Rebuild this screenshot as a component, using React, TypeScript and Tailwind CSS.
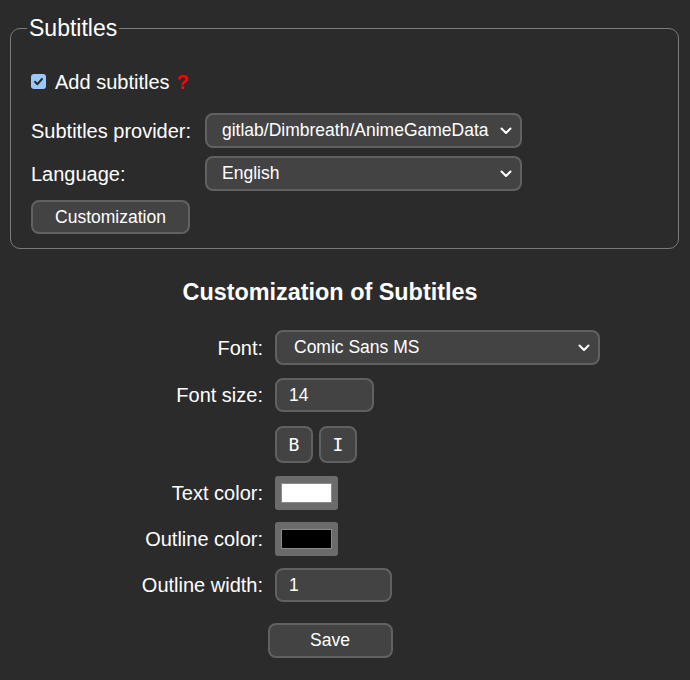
import { useState } from "react"

const font = "font-['Liberation_Sans',Arial,sans-serif]"

function Chevron() {
  return (
    <svg width="12" height="8" viewBox="0 0 12 8" className="shrink-0">
      <path d="M1.5 1.5 L6 6 L10.5 1.5" fill="none" stroke="#fff" strokeWidth="2" strokeLinecap="round" strokeLinejoin="round" />
    </svg>
  )
}

function Select({ value, className }: { value: string; className: string }) {
  return (
    <div
      className={`flex items-center justify-between h-[35px] rounded-[8px] border-2 border-[#616161] bg-[#434343] pl-[15px] pr-[8px] text-[17.5px] text-white ${className}`}
    >
      <span className="truncate">{value}</span>
      <Chevron />
    </div>
  )
}

function Field({ value, className }: { value: string; className: string }) {
  return (
    <div className={`flex items-center h-[34px] rounded-[8px] border-2 border-[#616161] bg-[#434343] px-[12px] text-[17.5px] text-white ${className}`}>
      {value}
    </div>
  )
}

function Swatch({ color }: { color: string }) {
  return (
    <div className="w-[63px] h-[34px] rounded-[3px] bg-[#6b6b6b] flex items-center justify-center">
      <div className={`w-[51px] h-[20px] border border-[#8a8a8a] ${color}`} />
    </div>
  )
}

function Row({ label, children, className = "" }: { label: string; children: React.ReactNode; className?: string }) {
  return (
    <div className={`flex items-center gap-[12px] ${className}`}>
      <div className="w-[263px] text-right text-[20px] text-white">{label}</div>
      {children}
    </div>
  )
}

export default function App() {
  const [checked] = useState(true)

  return (
    <div className={`min-h-[680px] w-[690px] bg-[#2b2b2b] pt-[15px] ${font}`}>
      <fieldset className="ml-[10px] w-[669px] rounded-[10px] border border-[#7a7a7a] px-[20px] pb-[14px]">
        <legend className="ml-[-4px] px-[2px] text-[23px] leading-[26px] text-white">Subtitles</legend>

        <label className="mt-[29px] flex items-center h-[23px] text-[20px] text-white">
          <span className="flex h-[15px] w-[15px] items-center justify-center rounded-[3px] bg-[#99c8ff]">
            {checked && (
              <svg width="11" height="11" viewBox="0 0 11 11">
                <path d="M2 5.8 L4.4 8.2 L9 3" fill="none" stroke="#2b2b2b" strokeWidth="2" strokeLinecap="round" strokeLinejoin="round" />
              </svg>
            )}
          </span>
          <span className="ml-[9px]">Add subtitles</span>
          <span className="ml-[7px] font-bold text-[#ff0000]">?</span>
        </label>

        <div className="mt-[20px] flex items-center">
          <div className="w-[174px] text-[20px] text-white">Subtitles provider:</div>
          <Select value="gitlab/Dimbreath/AnimeGameData" className="w-[317px]" />
        </div>
        <div className="mt-[8px] flex items-center">
          <div className="w-[174px] text-[20px] text-white">Language:</div>
          <Select value="English" className="w-[317px]" />
        </div>
        <button className="mt-[9px] h-[34px] w-[159px] rounded-[8px] border-2 border-[#616161] bg-[#434343] text-[17.5px] text-white">
          Customization
        </button>
      </fieldset>

      <div className="w-[660px]">
        <h3 className="mt-[30px] text-center text-[23.4px] leading-[27px] font-bold text-white">Customization of Subtitles</h3>

        <Row label="Font:" className="mt-[24px]">
          <Select value="Comic Sans MS" className="w-[325px] !pl-[17px]" />
        </Row>
        <Row label="Font size:" className="mt-[13px]">
          <Field value="14" className="w-[99px]" />
        </Row>
        <div className="mt-[14px] flex gap-[6px] pl-[275px]">
          <button className="h-[37px] w-[38px] rounded-[8px] border-2 border-[#616161] bg-[#434343] font-['DejaVu_Sans_Mono',monospace] text-[18px] text-white">
            B
          </button>
          <button className="h-[37px] w-[38px] rounded-[8px] border-2 border-[#616161] bg-[#434343] font-['DejaVu_Sans_Mono',monospace] text-[18px] text-white">
            I
          </button>
        </div>
        <Row label="Text color:" className="mt-[13px]">
          <Swatch color="bg-white" />
        </Row>
        <Row label="Outline color:" className="mt-[12px]">
          <Swatch color="bg-black" />
        </Row>
        <Row label="Outline width:" className="mt-[12px]">
          <Field value="1" className="w-[117px]" />
        </Row>
        <div className="mt-[21px] flex justify-center">
          <button className="h-[35px] w-[125px] rounded-[8px] border-2 border-[#616161] bg-[#434343] text-[17.5px] text-white">
            Save
          </button>
        </div>
      </div>
    </div>
  )
}
